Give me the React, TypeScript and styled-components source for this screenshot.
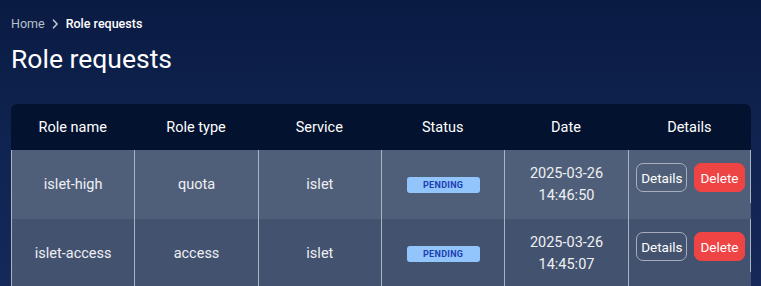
import React from "react";
import styled, { createGlobalStyle } from "styled-components";

const Global = createGlobalStyle`
  html, body { margin: 0; padding: 0; }
  body {
    font-family: Roboto, "Liberation Sans", sans-serif;
    background: linear-gradient(180deg, #0a1b43 0%, #0f2450 50%, #15295a 100%);
    min-height: 286px;
    overflow: hidden;
  }
`;

const Page = styled.div`
  padding: 16px 10px 0 11px;
  min-height: 286px;
  box-sizing: border-box;
`;

const Crumbs = styled.nav`
  display: flex;
  align-items: center;
  gap: 7px;
  font-size: 12.5px;
  line-height: 16px;
`;

const CrumbLink = styled.span`
  color: #b9c0cd;
`;

const CrumbCurrent = styled.span`
  color: #ffffff;
  font-weight: 500;
`;

const Title = styled.h1`
  margin: 11px 0 0 0;
  font-size: 26.5px;
  font-weight: 400;
  color: #ffffff;
  line-height: 32px;
`;

const Table = styled.div`
  margin-top: 29px;
  width: 740px;
  display: grid;
  grid-template-columns: repeat(6, 1fr);
`;

const HeadCell = styled.div<{ $first?: boolean; $last?: boolean }>`
  background: #03132f;
  color: #ffffff;
  font-size: 14.5px;
  height: 46px;
  display: flex;
  align-items: center;
  justify-content: center;
  border-top-left-radius: ${(p) => (p.$first ? "6px" : "0")};
  border-top-right-radius: ${(p) => (p.$last ? "6px" : "0")};
`;

const Cell = styled.div<{ $alt?: boolean; $actions?: boolean }>`
  background: ${(p) => (p.$alt ? "#43526e" : "#505f79")};
  color: #eef0f4;
  font-size: 14.5px;
  line-height: 22px;
  height: 69px;
  display: flex;
  align-items: ${(p) => (p.$actions ? "flex-start" : "center")};
  justify-content: center;
  text-align: center;
  border-left: 1px solid #aab3c2;
  box-sizing: border-box;
`;

const Badge = styled.span`
  display: inline-flex;
  align-items: center;
  justify-content: center;
  width: 73px;
  height: 16px;
  border-radius: 3px;
  background: #93c5fd;
  color: #1e40af;
  font-size: 9px;
  font-weight: 700;
  letter-spacing: 0.3px;
`;

const Actions = styled.div`
  flex: 1;
  display: flex;
  gap: 7px;
  align-items: flex-start;
  justify-content: center;
  padding: 13px 0 11px 2px;
  border-right: 1px solid #aab3c2;
`;

const Button = styled.button<{ $danger?: boolean }>`
  font-family: Roboto, "Liberation Sans", sans-serif;
  font-size: 13.5px;
  height: 29px;
  padding: 0 ${(p) => (p.$danger ? "5px" : "4px")};
  border-radius: 7px;
  color: #ffffff;
  cursor: pointer;
  background: ${(p) => (p.$danger ? "#ef4444" : "transparent")};
  border: 1px solid ${(p) => (p.$danger ? "#ef4444" : "#a6aebd")};
`;

const Chevron = () => (
  <svg width="7" height="10" viewBox="0 0 7 10" fill="none" stroke="#c2c8d4" strokeWidth="1.6" strokeLinecap="round" strokeLinejoin="round">
    <path d="M1.5 1.2l3.6 3.8-3.6 3.8" />
  </svg>
);

const rows = [
  { name: "islet-high", type: "quota", service: "islet", date: "2025-03-26", time: "14:46:50" },
  { name: "islet-access", type: "access", service: "islet", date: "2025-03-26", time: "14:45:07" },
];

const headers = ["Role name", "Role type", "Service", "Status", "Date", "Details"];

export default function App() {
  return (
    <>
      <Global />
      <Page>
        <Crumbs>
          <CrumbLink>Home</CrumbLink>
          <Chevron />
          <CrumbCurrent>Role requests</CrumbCurrent>
        </Crumbs>
        <Title>Role requests</Title>
        <Table>
          {headers.map((h, i) => (
            <HeadCell key={h} $first={i === 0} $last={i === headers.length - 1}>
              {h}
            </HeadCell>
          ))}
          {rows.map((r, i) => {
            const alt = i % 2 === 1;
            return (
              <React.Fragment key={r.name}>
                <Cell $alt={alt}>{r.name}</Cell>
                <Cell $alt={alt}>{r.type}</Cell>
                <Cell $alt={alt}>{r.service}</Cell>
                <Cell $alt={alt}>
                  <Badge>PENDING</Badge>
                </Cell>
                <Cell $alt={alt}>
                  {r.date}
                  <br />
                  {r.time}
                </Cell>
                <Cell $alt={alt} $actions>
                  <Actions>
                    <Button>Details</Button>
                    <Button $danger>Delete</Button>
                  </Actions>
                </Cell>
              </React.Fragment>
            );
          })}
        </Table>
      </Page>
    </>
  );
}
